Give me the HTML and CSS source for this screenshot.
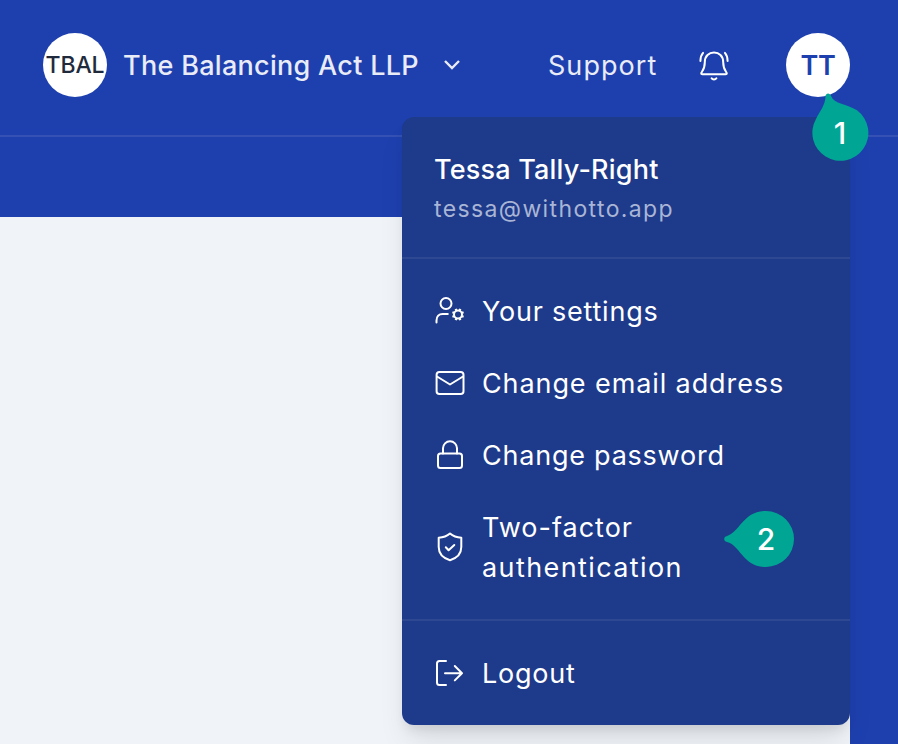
FILE: index.html
```html
<!DOCTYPE html>
<html lang="en">
<head>
<meta charset="utf-8">
<title>The Balancing Act LLP</title>
<link rel="stylesheet" href="styles.css">
</head>
<body>
<div class="app">
  <header class="header">
    <div class="org">
      <span class="avatar org-avatar">TBAL</span>
      <span class="org-name">The Balancing Act LLP</span>
      <svg class="chevron" width="18" height="12" viewBox="0 0 18 12"><path d="M2 2l7 7 7-7"/></svg>
    </div>
    <nav class="actions">
      <a class="support">Support</a>
      <svg class="icon bell" width="32" height="32" viewBox="0 0 32 32"><path d="M3.200 24.300c0-1.500 3.600-3 3.600-11C6.800 7 11 3.600 16 3.600S25.200 7 25.200 13.300c0 8 3.600 9.500 3.600 11 0 .6-.5.900-1.100.900H4.300c-.6 0-1.100-.3-1.100-.9zM13.600 29.300c1 1.700 3.800 1.700 4.800 0M2.400 12c0-3 .8-6 2.700-8.100M29.600 12c0-3-.8-6-2.700-8.100"/></svg>
      <span class="avatar user-avatar">TT</span>
    </nav>
  </header>
  <div class="subheader"></div>
  <div class="body"><main class="content"></main></div>
</div>

<section class="menu">
  <div class="profile">
    <div class="name">Tessa Tally-Right</div>
    <div class="email">tessa@withotto.app</div>
  </div>
  <div class="items">
    <a class="item"><svg class="icon" width="32" height="32" viewBox="0 0 32 32"><circle cx="12" cy="8.500" r="5.500"/><path d="M2.500 27.500v-2c0-4 2.500-6.500 6-6.500h5.300"/><circle cx="24" cy="19.500" r="4"/><path class="teeth" d="M28 21.200l1.600.6M25.700 23.500l.6 1.600M22.300 23.500l-.6 1.600M20 21.200l-1.600.6M20 17.800l-1.600-.6M22.300 15.500l-.6-1.600M25.700 15.500l.6-1.600M28 17.800l1.600-.6"/></svg><span>Your settings</span></a>
    <a class="item"><svg class="icon" width="32" height="32" viewBox="0 0 32 32"><rect x="2.600" y="5" width="26.900" height="22" rx="2.800"/><path d="M3 9.500L16 17.500l13-8"/></svg><span class="t-email">Change email address</span></a>
    <a class="item"><svg class="icon" width="32" height="32" viewBox="0 0 32 32"><rect x="4" y="14.500" width="24" height="14.500" rx="2.500"/><path d="M9 14.500V9.300a7 7 0 0 1 14 0v5.200"/></svg><span>Change password</span></a>
    <a class="item"><svg class="icon" width="32" height="32" viewBox="0 0 32 32"><path d="M16 2.500c3.400 3 7.200 4 11.300 4.200V16c0 6.500-4.800 11.200-11.300 13.200C9.500 27.200 4.700 22.500 4.700 16V6.700C8.800 6.500 12.600 5.500 16 2.500zM11.800 16.300l2.800 3 5.700-5.300"/></svg><span class="t-auth">Two-factor <span class="t-wide">authentication</span></span></a>
  </div>
  <div class="footer">
    <a class="item"><svg class="icon" width="32" height="32" viewBox="0 0 32 32"><path d="M12 3H5.500C4.100 3 3 4.100 3 5.500v19C3 25.900 4.100 27 5.500 27H12M11 15.200H28M20.800 8l7.200 7.200-7.200 7.200"/></svg><span>Logout</span></a>
  </div>
</section>

<div class="marker marker-one">
  <svg width="58" height="70" viewBox="0 0 58 70"><path d="M14.500 4C15 .5 19 .5 20 4C23 12 36 12 46 18.300A28 28 0 1 1 5 27C9 19 14.500 13 14.500 4z"/></svg>
  <span class="marker-label">1</span>
</div>
<div class="marker marker-two">
  <svg width="72" height="58" viewBox="0 0 72 58"><path d="M4 32C.3 31.500.3 26.500 4 26C17 22 20 1 43 1A28 28 0 0 1 43 57C20 57 17 35 4 32z"/></svg>
  <span class="marker-label">2</span>
</div>
</body>
</html>
```
FILE: styles.css
```css
* { box-sizing: border-box; }
body {
  margin: 0;
  overflow: hidden;
  font-family: Inter, "Liberation Sans", sans-serif;
  font-size: 27px;
  color: #fff;
}
.app {
  height: 744px;
  display: flex;
  flex-direction: column;
  background: #1e40af;
}
.header {
  height: 137px;
  flex: none;
  display: flex;
  justify-content: space-between;
  align-items: flex-start;
  padding: 33px 48px 0 43px;
  border-bottom: 2px solid #3451b3;
}
.org, .actions {
  display: flex;
  align-items: center;
  height: 64px;
  color: #e9ecf7;
  white-space: nowrap;
}
.avatar {
  width: 64px;
  height: 64px;
  border-radius: 50%;
  background: #fff;
  display: flex;
  align-items: center;
  justify-content: center;
  flex: none;
}
.org-avatar { color: #1f2b3d; font-size: 23px; font-weight: 500; letter-spacing: -.1px; }
.org-name { width: 297px; margin-left: 16px; font-weight: 500; letter-spacing: .3px; }
.chevron { margin-left: 23px; fill: none; stroke: #e9ecf7; stroke-width: 2.4; }
.support { width: 110px; letter-spacing: 1.05px; }
.bell { margin: 0 56px 0 40px; stroke-width: 1.9; }
.user-avatar { color: #1e40af; font-weight: 600; letter-spacing: -.4px; }
.subheader { height: 80px; flex: none; }
.body { flex: 1; display: flex; padding-right: 48px; }
.content { flex: 1; background: #f0f4f9; }
.icon {
  flex: none;
  fill: none;
  stroke: #fff;
  stroke-width: 2;
  stroke-linecap: round;
  stroke-linejoin: round;
}
.teeth { stroke-width: 2.2; stroke-linecap: butt; }
.menu {
  position: absolute;
  left: 402px;
  top: 117px;
  width: 448px;
  height: 608px;
  border-radius: 12px;
  background: #1e3a8a;
  box-shadow: 0 20px 30px -6px rgba(0,0,0,.1), 0 8px 12px -4px rgba(0,0,0,.1);
}
.profile {
  height: 142px;
  padding: 33px 32px 0;
  border-bottom: 2px solid #2f4892;
}
.name { font-weight: 500; line-height: 40px; letter-spacing: .2px; }
.email { font-size: 23px; line-height: 38px; color: #a9b5d6; letter-spacing: 1.38px; }
.items {
  height: 362px;
  padding: 33px 32px 0;
  border-bottom: 2px solid #2f4892;
  display: flex;
  flex-direction: column;
  gap: 32px;
}
.items .icon { margin-top: -2px; }
.item { display: flex; align-items: center; gap: 16px; line-height: 40px; letter-spacing: .77px; }
.t-email { letter-spacing: .9px; }
.t-auth { width: 230px; letter-spacing: 1px; }
.t-wide { letter-spacing: 1.4px; }
.footer { padding: 33px 32px 0; }
.marker { position: absolute; fill: #00a693; }
.marker svg { display: block; }
.marker-label {
  position: absolute;
  inset: 0;
  display: flex;
  align-items: center;
  justify-content: center;
  font-size: 30px;
  font-weight: 500;
}
.marker-one { left: 811px; top: 92px; }
.marker-two { left: 723px; top: 510px; }
.marker-one .marker-label { padding-top: 11px; }
.marker-two .marker-label { padding-left: 14px; }
```
